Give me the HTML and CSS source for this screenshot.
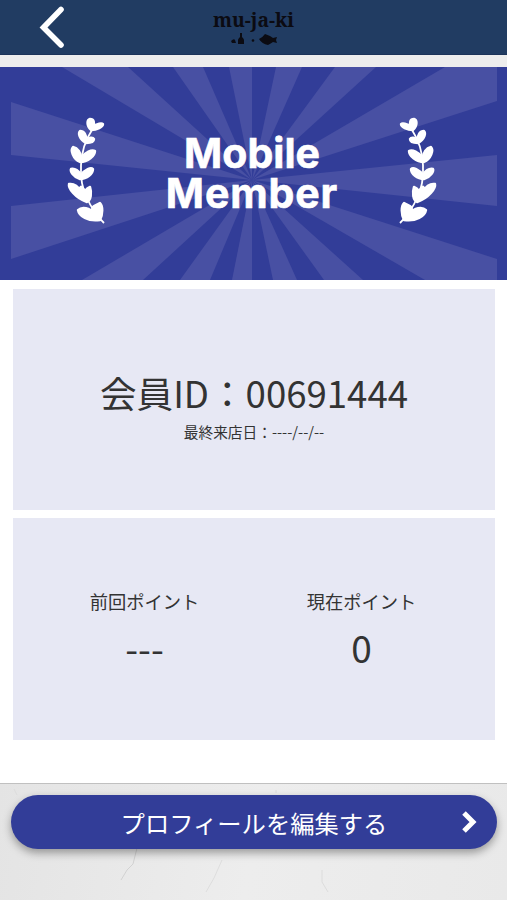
FILE: index.html
```html
<!DOCTYPE html>
<html lang="ja">
<head>
    <meta charset="UTF-8">
    <meta name="viewport" content="width=device-width, initial-scale=1.0">
    <title>mu-ja-ki</title>
    <link rel="stylesheet" href="styles.css">
</head>
<body>
    <header class="header">
        <a class="back" href="#" aria-label="戻る">
            <svg width="26" height="44" viewBox="0 0 26 44">
                <path d="M22 4.500L4.500 22.500l17.500 17.500" fill="none" stroke="#fff" stroke-width="5.600" stroke-linecap="round"/>
            </svg>
        </a>
        <div class="logo">
            <div class="logo-text">mu-ja-ki</div>
            <svg class="logo-mark" width="48" height="14" viewBox="0 0 48 14">
                <path d="M10 1h2v4q2 2 2 3v4H8V8q0-1 2-3zM1 9q3-3 4-1l1 3H2z"/>
                <circle cx="23" cy="8.5" r="1.3"/>
                <path d="M29 7q4-2 6-5l5 2 3 2 4-1-1 3 1 3-4-1q-3 2-5 3-6-1-9-6z"/>
            </svg>
        </div>
    </header>

    <main class="card">
        <section class="banner">
            <svg class="rays" viewBox="0 0 507 213">
                <g fill="#4850a3">
                    <path d="M252 113L62 0h66z"/>
                    <path d="M252 113L173 0h30z"/>
                    <path d="M252 113L229 0h23z"/>
                    <path d="M252 113L276 0h26z"/>
                    <path d="M252 113L335 0h41z"/>
                    <path d="M252 113L445 0h52v34z"/>
                    <path d="M252 113l245-25v51z"/>
                    <path d="M252 113l245 79v21h-72z"/>
                    <path d="M252 113l72 100h39z"/>
                    <path d="M252 113l21 100h24z"/>
                    <path d="M252 113v100h-20z"/>
                    <path d="M252 113l-42 100h-30z"/>
                    <path d="M252 113L143 213H82z"/>
                    <path d="M252 113L11 192v-53z"/>
                    <path d="M252 113L11 88V35z"/>
                </g>
            </svg>
            <svg class="laurel" width="40" height="108" viewBox="0 0 40 108">
                <g id="branch" fill="#fff" stroke="#fff" stroke-width="2.4" stroke-linejoin="round">
                    <path d="M26 13Q16 28 15 48q-1 20 6 33 6 14 17 25" fill="none" stroke-width="1.8"/>
                    <path d="M25 13c-5-5-4-10-1-11 4 0 5 4 3 8 4-4 9-4 10-3 0 3-6 6-12 6z"/>
                    <path d="M20 26c-7-4-8-10-6-12 4 0 7 4 6 9 3-3 7-3 8-1 0 3-4 4-8 4z"/>
                    <path d="M14 45C7 42 4 33 7 30c5 1 8 6 8 11 4-6 11-9 14-7 0 5-7 11-15 11z"/>
                    <path d="M14 62C7 60 4 54 5 52c4-1 8 2 10 6 4-6 10-8 12-6 0 5-6 10-13 10z"/>
                    <path d="M21 85C9 81 2 71 3 67c5-1 10 3 12 8-1-4-1-6 1-5l3 4q2-3 5-4c2 6 1 13-3 15z"/>
                    <path d="M34 103c-12 2-21-4-22-10 4-4 12-2 16 3-5-8 2-7 6-10 3 3 3 11 0 17z"/>
                </g>
            </svg>
            <h1 class="rank"><span class="rank-mobile">Mobile</span><span class="rank-member">Member</span></h1>
            <svg class="laurel laurel-right" width="40" height="108" viewBox="0 0 40 108">
                <use href="#branch"/>
            </svg>
        </section>

        <section class="panel member">
            <div class="member-id">会員ID：00691444</div>
            <div class="last-visit">最終来店日：----/--/--</div>
        </section>

        <section class="panel points">
            <div class="point">
                <div class="point-label">前回ポイント</div>
                <div class="point-value">---</div>
            </div>
            <div class="point">
                <div class="point-label">現在ポイント</div>
                <div class="point-value">0</div>
            </div>
        </section>
    </main>

    <footer class="footer">
        <svg class="cracks" width="507" height="116" viewBox="0 0 507 116">
            <g fill="none" stroke="#d2d2d2">
                <path d="M137 64l-4 16-6 6-6 10"/>
                <path d="M222 76l-8 18-8 14" stroke="#dedede"/>
                <path d="M322 86v12l6 10" stroke="#dcdcdc"/>
                <path d="M14 5l3 6m259-5v3" stroke="#dcdcdc"/>
            </g>
        </svg>
        <button class="edit-btn">
            プロフィールを編集する
            <svg class="edit-arrow" width="16" height="24" viewBox="0 0 16 24">
                <path d="M3 3l9 9-9 9" fill="none" stroke="#fff" stroke-width="5"/>
            </svg>
        </button>
    </footer>
</body>
</html>
```

FILE: styles.css
```css
* {
    box-sizing: border-box;
}

body {
    margin: 0;
    height: 900px;
    overflow: hidden;
    display: flex;
    flex-direction: column;
    background: #ededed;
    color: #333;
    font-family: "Noto Sans CJK JP", sans-serif;
}

.header {
    position: relative;
    height: 55px;
    flex: none;
    background: #213c62;
    border-bottom: 1px solid #1c3359;
    display: flex;
    justify-content: center;
}

.back {
    position: absolute;
    left: 39px;
    top: 5px;
}

.back svg {
    display: block;
}

.logo {
    display: flex;
    flex-direction: column;
    align-items: center;
    padding-top: 8px;
    color: #0b0b12;
}

.logo-text {
    font-family: "Noto Serif", "DejaVu Serif Condensed", "DejaVu Serif", serif;
    font-stretch: condensed;
    font-weight: bold;
    font-size: 19.3px;
    line-height: 24px;
    white-space: nowrap;
}

.logo-mark {
    display: block;
    fill: #0b0b12;
}

.card {
    flex: none;
    height: 717px;
    margin-top: 12px;
    background: #fff;
    border-bottom: 1px solid #c0c0c0;
}

/* banner */
.banner {
    position: relative;
    height: 213px;
    background: #323d98;
    display: flex;
    justify-content: space-between;
    padding: 50px 69px 0 66px;
}

.rays {
    position: absolute;
    inset: 0;
    width: 100%;
    height: 100%;
}

.laurel {
    position: relative;
}

.laurel-right {
    transform: scaleX(-1);
}

.rank {
    position: relative;
    margin: 16px 0 0;
    color: #fff;
    font-family: Inter, sans-serif;
    font-size: 41px;
    font-weight: 700;
    line-height: 40px;
    text-align: center;
    white-space: nowrap;
    -webkit-text-stroke: 0.6px #fff;
}

.rank span {
    display: block;
}

.rank-member {
    letter-spacing: 0.9px;
}

/* panels */
.panel {
    margin: 9px 12px 0 13px;
    height: 221px;
    background: #e7e8f4;
}

.member {
    display: flex;
    flex-direction: column;
    align-items: center;
    padding-top: 79px;
}

.member-id {
    font-size: 36.6px;
    line-height: 50px;
    white-space: nowrap;
}

.last-visit {
    margin-top: 1px;
    font-size: 14.7px;
    line-height: 26px;
}

.points {
    display: grid;
    grid-template-columns: 1fr 1fr;
    height: 222px;
    margin-top: 8px;
    padding: 69px 25px 0 23px;
    text-align: center;
}

.point-label {
    font-size: 18.3px;
    line-height: 28px;
}

.point-value {
    margin-top: 7px;
    font-size: 37px;
    line-height: 50px;
}

/* footer */
.footer {
    position: relative;
    flex: 1;
    padding: 11px 10px 0 11px;
    background: linear-gradient(100deg, #e4e4e4, #ededed 50%, #e9e9e9);
}

.cracks {
    position: absolute;
    left: 0;
    top: 0;
}

.edit-btn {
    position: relative;
    display: block;
    width: 100%;
    height: 54px;
    padding: 0;
    border: none;
    border-radius: 27px;
    background: #323d98;
    color: #fff;
    font-family: inherit;
    font-size: 24.3px;
    box-shadow: 0 4px 8px rgba(0, 0, 0, 0.35);
    cursor: pointer;
}

.edit-arrow {
    position: absolute;
    right: 20px;
    top: 15px;
}
```
